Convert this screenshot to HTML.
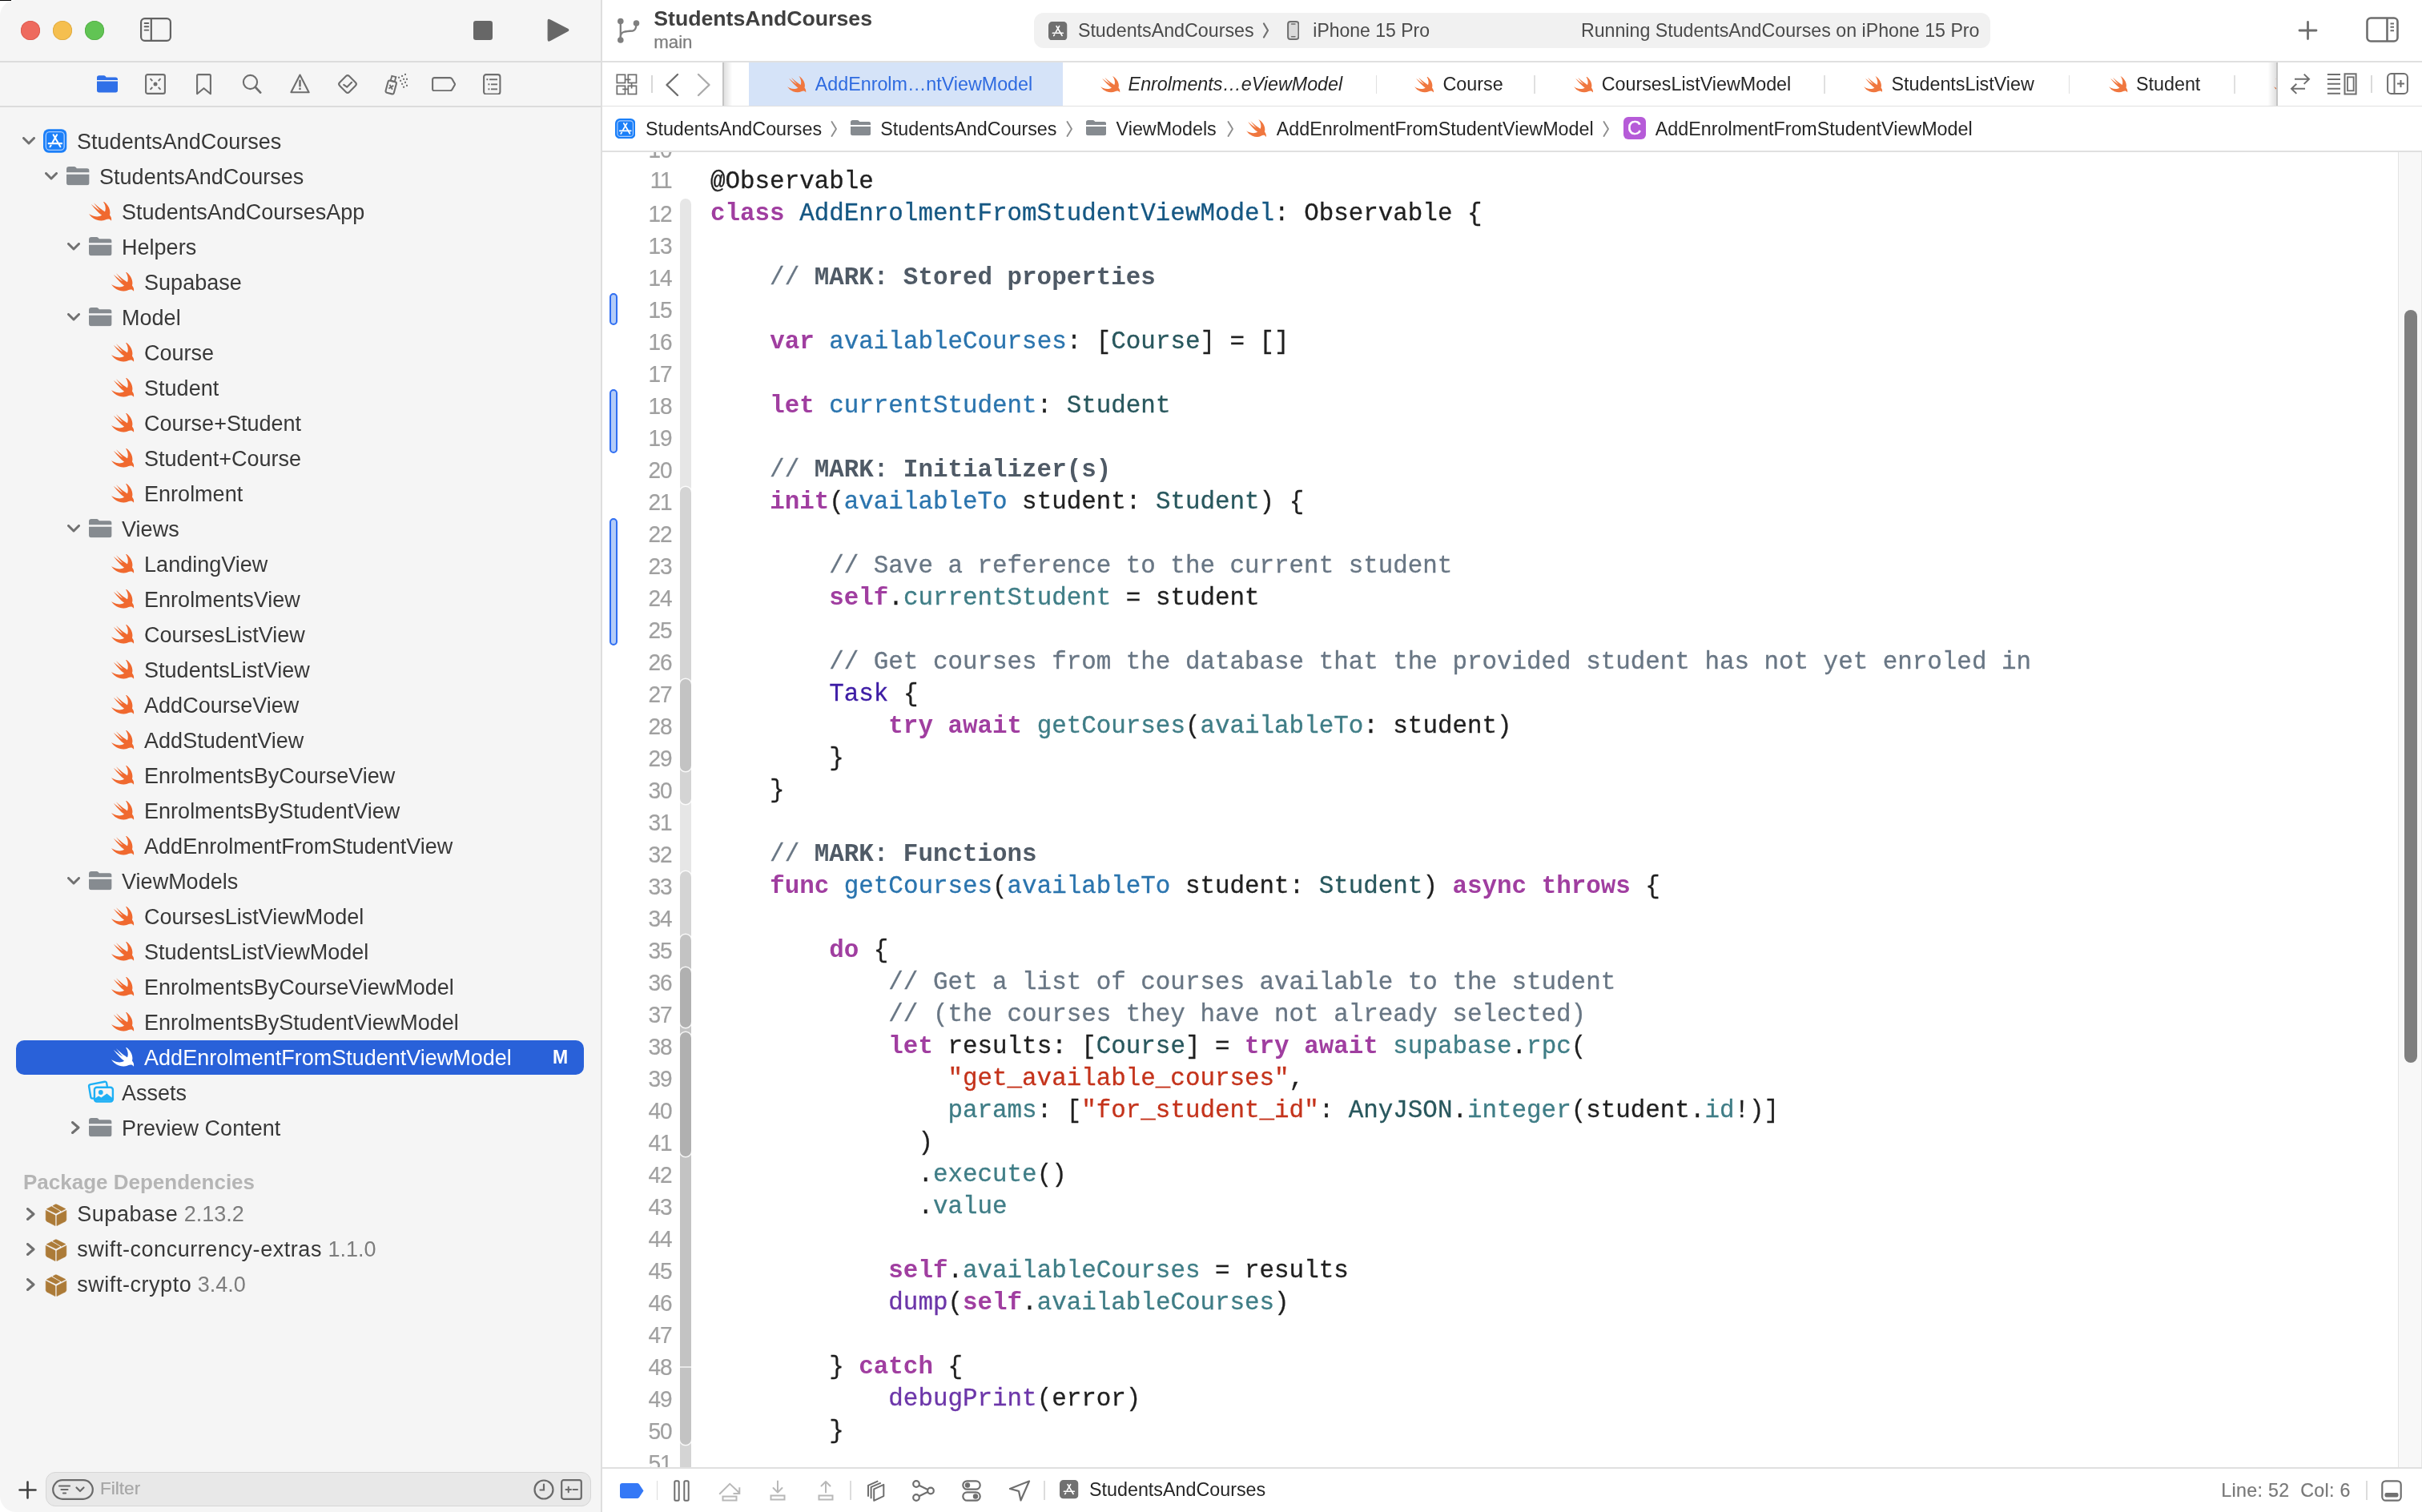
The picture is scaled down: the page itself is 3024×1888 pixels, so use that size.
<!DOCTYPE html>
<html><head><meta charset="utf-8"><title>Xcode</title>
<style>
html,body{margin:0;padding:0}
body{width:3024px;height:1888px;overflow:hidden;position:relative;background:#ffffff;font-family:"Liberation Sans",sans-serif}
.a{position:absolute;display:block}
.t{position:absolute;white-space:pre;line-height:0}
#root{position:absolute;left:0;top:0;width:3024px;height:1888px;will-change:transform;opacity:0.999}
.s{font-family:"Liberation Sans",sans-serif}
.m{font-family:"Liberation Mono",monospace}
</style></head><body><div id="root">

<svg width="0" height="0" style="position:absolute">
<defs>
<symbol id="swift" viewBox="2.41 3.41 18.12 16.21" preserveAspectRatio="none"><path fill="currentColor" d="M13.543 3.41c4.114 2.47 6.545 7.162 5.549 11.131-.024.093-.05.181-.076.272l.002.001c2.062 2.538 1.5 5.258 1.236 4.745-1.072-2.086-3.066-1.568-4.088-1.043a6.803 6.803 0 0 1-.281.158l-.02.012-.002.002c-2.115 1.123-4.957 1.205-7.812-.022a12.568 12.568 0 0 1-5.64-4.838c.649.48 1.35.902 2.097 1.252 3.019 1.414 6.051 1.311 8.197-.002C9.651 12.73 7.101 9.67 5.146 7.191a10.628 10.628 0 0 1-1.005-1.384c2.34 2.142 6.038 4.83 7.365 5.576C8.69 8.408 6.208 4.743 6.324 4.86c4.436 4.47 8.528 6.996 8.528 6.996.154.085.27.154.36.213.085-.215.16-.437.224-.668.708-2.588-.09-5.548-1.893-7.992z"/></symbol>
<symbol id="folder" viewBox="0 0 29 24" preserveAspectRatio="none"><path fill="currentColor" d="M0 3.2Q0 0 3.2 0H9.6Q11 0 12 1.1L13 2.4H25.8Q29 2.4 29 5.6V7.5H0Z M0 9.9H29V20.6Q29 23.6 26 23.6H3Q0 23.6 0 20.6Z"/></symbol>
<symbol id="chevd" viewBox="0 0 16 10"><path fill="none" stroke="currentColor" stroke-width="3" stroke-linecap="round" stroke-linejoin="round" d="M1.5 1.5L8 8L14.5 1.5"/></symbol>
<symbol id="chevr" viewBox="0 0 11 16"><path fill="none" stroke="currentColor" stroke-width="3" stroke-linecap="round" stroke-linejoin="round" d="M1.5 1.5L9 8L1.5 14.5"/></symbol>
<symbol id="appicon" viewBox="0 0 30 30"><rect x="0" y="0" width="30" height="30" rx="7" fill="#1b7ff8"/><rect x="3.4" y="3.4" width="23.2" height="23.2" rx="4.5" fill="none" stroke="#a9cdff" stroke-width="1.4"/><g fill="none" stroke="#fff" stroke-width="2.1" stroke-linecap="round"><path d="M12.8 7.2L21.8 22.3"/><path d="M17.4 7.2L11.8 16.8"/><path d="M6.8 18.2H23.4"/><path d="M8.6 22.4L9.8 20.6"/></g></symbol>
<symbol id="appgray" viewBox="0 0 30 30"><rect x="0" y="0" width="30" height="30" rx="6" fill="#707070"/><g fill="none" stroke="#fff" stroke-width="2.1" stroke-linecap="round"><path d="M12.8 7.2L21.8 22.3"/><path d="M17.4 7.2L11.8 16.8"/><path d="M6.8 18.2H23.4"/><path d="M8.6 22.4L9.8 20.6"/></g></symbol>
<symbol id="pkg" viewBox="0 0 28 28"><g fill="#ac7b38" stroke="#ac7b38" stroke-width="0.6" stroke-linejoin="round"><path d="M1.2 8.4L13 14.6V27.6L2.6 22.2Q1.2 21.4 1.2 19.8Z"/><path d="M26.8 8.4L14.9 14.6V27.6L25.4 22.2Q26.8 21.4 26.8 19.8Z"/><path d="M2.2 6.7L8.3 3.5L18.9 9.6L13.9 12.3Z"/><path d="M9.9 2.7L12.8 1.1Q13.9 0.6 15 1.1L25.9 6.6L20.7 9.2Z"/></g></symbol>
</defs></svg>

<div class="a" style="left:0;top:0;width:750px;height:1888px;background:#f5f5f5;border-top-left-radius:20px;border-bottom-left-radius:20px;"></div>
<div class="a" style="left:750px;top:0px;width:1.5px;height:1888px;background:#dedede;"></div>
<div class="a" style="left:0px;top:0px;width:14px;height:1.2px;background:#000;"></div>
<div class="a" style="left:26px;top:26px;width:24px;height:24px;border-radius:50%;background:#ee6a5e;box-shadow:inset 0 0 0 0.8px #d8584c"></div>
<div class="a" style="left:66px;top:26px;width:24px;height:24px;border-radius:50%;background:#f5bf4f;box-shadow:inset 0 0 0 0.8px #dca73f"></div>
<div class="a" style="left:106px;top:26px;width:24px;height:24px;border-radius:50%;background:#61c454;box-shadow:inset 0 0 0 0.8px #52ab45"></div>
<svg class="a" style="left:174.5px;top:22px;" width="39" height="30" viewBox="0 0 39 30"><rect x="1.1" y="1.1" width="36.8" height="27.8" rx="4.6" fill="none" stroke="#626262" stroke-width="2.2"/><path d="M13.8 1.1V28.9" stroke="#626262" stroke-width="2.2"/><path d="M5.6 7H10.3M5.6 11.3H10.3M5.6 15.6H10.3" stroke="#626262" stroke-width="1.9" stroke-linecap="round"/></svg>
<div class="a" style="left:591px;top:26px;width:24px;height:24px;background:#676767;border-radius:3.2px"></div>
<svg class="a" style="left:683px;top:23px;" width="29" height="30" viewBox="0 0 29 30"><path d="M1.2 3.2Q1.2 0.6 3.5 1.9L25.8 13.2Q27.8 14.5 25.8 15.8L3.5 27.6Q1.2 28.9 1.2 26.3Z" fill="#676767" stroke="#676767" stroke-width="1.2" stroke-linejoin="round"/></svg>
<div class="a" style="left:0px;top:76.2px;width:750px;height:1.8px;background:#dcdcdc;"></div>
<div class="a" style="left:0px;top:132.2px;width:750px;height:1.8px;background:#dcdcdc;"></div>
<svg class="a" style="left:121px;top:94px;" width="26" height="22" viewBox="0 0 29 24"><path fill="#3070e8" d="M0 3.2Q0 0 3.2 0H9.6Q11 0 12 1.1L13 2.4H25.8Q29 2.4 29 5.6V6.5H0Z M0 8.2H29V20.6Q29 23.6 26 23.6H3Q0 23.6 0 20.6Z"/></svg>
<svg class="a" style="left:181px;top:92px;" width="26" height="26" viewBox="0 0 26 26"><rect x="1.1" y="1.1" width="23.8" height="23.8" rx="2.2" fill="none" stroke="#6e6e6e" stroke-width="2.1"/><circle cx="13" cy="13" r="2.5" fill="#6e6e6e"/><path d="M6.5 6.2L9.3 9M19.5 6.2L16.7 9M6.5 19.8L9.3 17M19.5 19.8L16.7 17" stroke="#6e6e6e" stroke-width="1.9" stroke-linecap="butt"/></svg>
<svg class="a" style="left:244.5px;top:92px;" width="19" height="26.5" viewBox="0 0 19 26.5"><path d="M1.1 2.6Q1.1 1.1 2.6 1.1H16.4Q17.9 1.1 17.9 2.6V25.2L9.5 18.2L1.1 25.2Z" fill="none" stroke="#6e6e6e" stroke-width="2.1" stroke-linejoin="round"/></svg>
<svg class="a" style="left:302px;top:92px;" width="25" height="26" viewBox="0 0 25 26"><circle cx="10.5" cy="10.5" r="8.6" fill="none" stroke="#6e6e6e" stroke-width="2.1"/><path d="M16.8 16.8L23.2 23.6" stroke="#6e6e6e" stroke-width="2.7" stroke-linecap="round"/></svg>
<svg class="a" style="left:361.5px;top:92px;" width="25" height="25" viewBox="0 0 25 25"><path d="M12.5 1.5L23.6 23.3H1.4Z" fill="none" stroke="#6e6e6e" stroke-width="2.1" stroke-linejoin="round"/><path d="M12.5 8.8V15.3" stroke="#6e6e6e" stroke-width="2.5" stroke-linecap="round"/><circle cx="12.5" cy="18.9" r="1.35" fill="#6e6e6e"/></svg>
<svg class="a" style="left:420px;top:91px;" width="28" height="28" viewBox="0 0 28 28"><rect x="5.6" y="5.6" width="16.8" height="16.8" rx="2.8" fill="none" stroke="#6e6e6e" stroke-width="2.1" transform="rotate(45 14 14)"/><path d="M9.2 14.8L13.2 17.7L19.1 11.8" fill="none" stroke="#6e6e6e" stroke-width="2.1" stroke-linecap="round" stroke-linejoin="round"/></svg>
<svg class="a" style="left:478px;top:91px;" width="33" height="29" viewBox="0 0 33 29"><g transform="rotate(15 10.2 18)"><rect x="4.9" y="10.2" width="10.6" height="15.6" rx="2" fill="none" stroke="#6e6e6e" stroke-width="2.1"/><rect x="7.6" y="4" width="5.2" height="6.2" fill="none" stroke="#6e6e6e" stroke-width="1.9"/><path d="M7.8 15.2L12.6 20.2M12.6 15.2L7.8 20.2" stroke="#6e6e6e" stroke-width="1.9"/></g><rect x="27.0" y="0.9" width="2" height="2" fill="#6e6e6e"/><rect x="23.1" y="2.9" width="2" height="2" fill="#6e6e6e"/><rect x="19.1" y="4.8" width="2" height="2" fill="#6e6e6e"/><rect x="25.1" y="6.8" width="2" height="2" fill="#6e6e6e"/><rect x="29.0" y="6.8" width="2" height="2" fill="#6e6e6e"/><rect x="21.1" y="8.8" width="2" height="2" fill="#6e6e6e"/><rect x="27.0" y="10.8" width="2" height="2" fill="#6e6e6e"/><rect x="23.1" y="12.8" width="2" height="2" fill="#6e6e6e"/><rect x="29.0" y="14.8" width="2" height="2" fill="#6e6e6e"/><rect x="25.1" y="16.7" width="2" height="2" fill="#6e6e6e"/></svg>
<svg class="a" style="left:538.5px;top:95.5px;" width="30.5" height="18.5" viewBox="0 0 30.5 18.5"><path d="M3.5 1.1H22.8Q24.3 1.1 25.2 2.3L29.2 9.25L25.2 16.2Q24.3 17.4 22.8 17.4H3.5Q1.1 17.4 1.1 15V3.5Q1.1 1.1 3.5 1.1Z" fill="none" stroke="#6e6e6e" stroke-width="2.1" stroke-linejoin="round"/></svg>
<svg class="a" style="left:603px;top:91.8px;" width="22.5" height="26.6" viewBox="0 0 22.5 26.6"><rect x="1.1" y="1.1" width="20.3" height="24.4" rx="2.8" fill="none" stroke="#6e6e6e" stroke-width="2.1"/><g fill="#6e6e6e"><rect x="4.4" y="6.2" width="2" height="2"/><rect x="6.4" y="12.3" width="2" height="2"/><rect x="6.4" y="18.3" width="2" height="2"/><rect x="8" y="6.3" width="10" height="1.9"/><rect x="10" y="12.4" width="8" height="1.9"/><rect x="10" y="18.4" width="8" height="1.9"/></g></svg>
<svg class="a" style="left:28px;top:171.2px;color:#707070;" width="16" height="10"><use href="#chevd"/></svg>
<svg class="a" style="left:54.2px;top:160.9px;" width="29.5" height="30"><use href="#appicon"/></svg>
<div class="t s" style="top:176.94px;font-size:27px;color:#383838;left:96.1px;">StudentsAndCourses</div>
<svg class="a" style="left:56px;top:215.2px;color:#707070;" width="16" height="10"><use href="#chevd"/></svg>
<svg class="a" style="left:83.2px;top:208.1px;color:#868b90;" width="28.6" height="23.6"><use href="#folder"/></svg>
<div class="t s" style="top:220.94px;font-size:27px;color:#383838;left:124.1px;">StudentsAndCourses</div>
<svg class="a" style="left:111.3px;top:251px;color:#f0692f;" width="28.3" height="24.8"><use href="#swift"/></svg>
<div class="t s" style="top:264.94px;font-size:27px;color:#383838;left:152.1px;">StudentsAndCoursesApp</div>
<svg class="a" style="left:84px;top:303.2px;color:#707070;" width="16" height="10"><use href="#chevd"/></svg>
<svg class="a" style="left:111.2px;top:296.1px;color:#868b90;" width="28.6" height="23.6"><use href="#folder"/></svg>
<div class="t s" style="top:308.94px;font-size:27px;color:#383838;left:152.1px;">Helpers</div>
<svg class="a" style="left:139.3px;top:339px;color:#f0692f;" width="28.3" height="24.8"><use href="#swift"/></svg>
<div class="t s" style="top:352.94px;font-size:27px;color:#383838;left:180.1px;">Supabase</div>
<svg class="a" style="left:84px;top:391.2px;color:#707070;" width="16" height="10"><use href="#chevd"/></svg>
<svg class="a" style="left:111.2px;top:384.1px;color:#868b90;" width="28.6" height="23.6"><use href="#folder"/></svg>
<div class="t s" style="top:396.94px;font-size:27px;color:#383838;left:152.1px;">Model</div>
<svg class="a" style="left:139.3px;top:427px;color:#f0692f;" width="28.3" height="24.8"><use href="#swift"/></svg>
<div class="t s" style="top:440.94px;font-size:27px;color:#383838;left:180.1px;">Course</div>
<svg class="a" style="left:139.3px;top:471px;color:#f0692f;" width="28.3" height="24.8"><use href="#swift"/></svg>
<div class="t s" style="top:484.94px;font-size:27px;color:#383838;left:180.1px;">Student</div>
<svg class="a" style="left:139.3px;top:515px;color:#f0692f;" width="28.3" height="24.8"><use href="#swift"/></svg>
<div class="t s" style="top:528.94px;font-size:27px;color:#383838;left:180.1px;">Course+Student</div>
<svg class="a" style="left:139.3px;top:559px;color:#f0692f;" width="28.3" height="24.8"><use href="#swift"/></svg>
<div class="t s" style="top:572.94px;font-size:27px;color:#383838;left:180.1px;">Student+Course</div>
<svg class="a" style="left:139.3px;top:603px;color:#f0692f;" width="28.3" height="24.8"><use href="#swift"/></svg>
<div class="t s" style="top:616.94px;font-size:27px;color:#383838;left:180.1px;">Enrolment</div>
<svg class="a" style="left:84px;top:655.2px;color:#707070;" width="16" height="10"><use href="#chevd"/></svg>
<svg class="a" style="left:111.2px;top:648.1px;color:#868b90;" width="28.6" height="23.6"><use href="#folder"/></svg>
<div class="t s" style="top:660.94px;font-size:27px;color:#383838;left:152.1px;">Views</div>
<svg class="a" style="left:139.3px;top:691px;color:#f0692f;" width="28.3" height="24.8"><use href="#swift"/></svg>
<div class="t s" style="top:704.94px;font-size:27px;color:#383838;left:180.1px;">LandingView</div>
<svg class="a" style="left:139.3px;top:735px;color:#f0692f;" width="28.3" height="24.8"><use href="#swift"/></svg>
<div class="t s" style="top:748.94px;font-size:27px;color:#383838;left:180.1px;">EnrolmentsView</div>
<svg class="a" style="left:139.3px;top:779px;color:#f0692f;" width="28.3" height="24.8"><use href="#swift"/></svg>
<div class="t s" style="top:792.94px;font-size:27px;color:#383838;left:180.1px;">CoursesListView</div>
<svg class="a" style="left:139.3px;top:823px;color:#f0692f;" width="28.3" height="24.8"><use href="#swift"/></svg>
<div class="t s" style="top:836.94px;font-size:27px;color:#383838;left:180.1px;">StudentsListView</div>
<svg class="a" style="left:139.3px;top:867px;color:#f0692f;" width="28.3" height="24.8"><use href="#swift"/></svg>
<div class="t s" style="top:880.94px;font-size:27px;color:#383838;left:180.1px;">AddCourseView</div>
<svg class="a" style="left:139.3px;top:911px;color:#f0692f;" width="28.3" height="24.8"><use href="#swift"/></svg>
<div class="t s" style="top:924.94px;font-size:27px;color:#383838;left:180.1px;">AddStudentView</div>
<svg class="a" style="left:139.3px;top:955px;color:#f0692f;" width="28.3" height="24.8"><use href="#swift"/></svg>
<div class="t s" style="top:968.94px;font-size:27px;color:#383838;left:180.1px;">EnrolmentsByCourseView</div>
<svg class="a" style="left:139.3px;top:999px;color:#f0692f;" width="28.3" height="24.8"><use href="#swift"/></svg>
<div class="t s" style="top:1012.94px;font-size:27px;color:#383838;left:180.1px;">EnrolmentsByStudentView</div>
<svg class="a" style="left:139.3px;top:1043px;color:#f0692f;" width="28.3" height="24.8"><use href="#swift"/></svg>
<div class="t s" style="top:1056.94px;font-size:27px;color:#383838;left:180.1px;">AddEnrolmentFromStudentView</div>
<svg class="a" style="left:84px;top:1095.2px;color:#707070;" width="16" height="10"><use href="#chevd"/></svg>
<svg class="a" style="left:111.2px;top:1088.1px;color:#868b90;" width="28.6" height="23.6"><use href="#folder"/></svg>
<div class="t s" style="top:1100.94px;font-size:27px;color:#383838;left:152.1px;">ViewModels</div>
<svg class="a" style="left:139.3px;top:1131px;color:#f0692f;" width="28.3" height="24.8"><use href="#swift"/></svg>
<div class="t s" style="top:1144.94px;font-size:27px;color:#383838;left:180.1px;">CoursesListViewModel</div>
<svg class="a" style="left:139.3px;top:1175px;color:#f0692f;" width="28.3" height="24.8"><use href="#swift"/></svg>
<div class="t s" style="top:1188.94px;font-size:27px;color:#383838;left:180.1px;">StudentsListViewModel</div>
<svg class="a" style="left:139.3px;top:1219px;color:#f0692f;" width="28.3" height="24.8"><use href="#swift"/></svg>
<div class="t s" style="top:1232.94px;font-size:27px;color:#383838;left:180.1px;">EnrolmentsByCourseViewModel</div>
<svg class="a" style="left:139.3px;top:1263px;color:#f0692f;" width="28.3" height="24.8"><use href="#swift"/></svg>
<div class="t s" style="top:1276.94px;font-size:27px;color:#383838;left:180.1px;">EnrolmentsByStudentViewModel</div>
<div class="a" style="left:20.4px;top:1298.8px;width:708.2px;height:43.2px;background:#2961d9;border-radius:10px"></div>
<svg class="a" style="left:139.3px;top:1307px;color:#ffffff;" width="28.3" height="24.8"><use href="#swift"/></svg>
<div class="t s" style="top:1320.94px;font-size:27px;color:#ffffff;left:180.1px;">AddEnrolmentFromStudentViewModel</div>
<div class="t s" style="top:1320.03px;font-size:23px;color:#ffffff;left:690px;font-weight:bold;">M</div>
<svg class="a" style="left:109px;top:1348px;" width="34" height="30" viewBox="0 0 34 30"><g fill="none" stroke="#1fb0f5" stroke-width="2.4" stroke-linejoin="round"><path d="M8.9 23.4L6.6 23.6Q4.6 23.8 4.3 21.7L2.1 8.6Q1.8 6.5 3.9 6.1L21.6 2.7Q23.7 2.3 24.1 4.4L25 9.5"/><rect x="8.9" y="9.7" width="23" height="17.8" rx="3"/></g><g fill="#1fb0f5"><circle cx="16.8" cy="16" r="2.9"/><path d="M10 23.2L14.1 20.4L17.4 22.6L24.4 17.6L31 22.8V26.6H10Z"/></g></svg>
<div class="t s" style="top:1364.94px;font-size:27px;color:#383838;left:152.1px;">Assets</div>
<svg class="a" style="left:89px;top:1400.2px;color:#707070;" width="11" height="16"><use href="#chevr"/></svg>
<svg class="a" style="left:111.2px;top:1396.1px;color:#868b90;" width="28.6" height="23.6"><use href="#folder"/></svg>
<div class="t s" style="top:1408.94px;font-size:27px;color:#383838;left:152.1px;">Preview Content</div>
<div class="t s" style="top:1476.49px;font-size:26px;color:#b5b5b5;left:29px;font-weight:bold;">Package Dependencies</div>
<svg class="a" style="left:32.5px;top:1508px;color:#707070;" width="11" height="16"><use href="#chevr"/></svg>
<svg class="a" style="left:56px;top:1502.5px;" width="28" height="28"><use href="#pkg"/></svg>
<div class="t s" style="top:1516.44px;font-size:27px;color:#383838;left:96.2px;"><span style="letter-spacing:0.55px">Supabase</span> <span style="color:#7d7d7d">2.13.2</span></div>
<svg class="a" style="left:32.5px;top:1552px;color:#707070;" width="11" height="16"><use href="#chevr"/></svg>
<svg class="a" style="left:56px;top:1546.5px;" width="28" height="28"><use href="#pkg"/></svg>
<div class="t s" style="top:1560.44px;font-size:27px;color:#383838;left:96.2px;"><span style="letter-spacing:0.55px">swift-concurrency-extras</span> <span style="color:#7d7d7d">1.1.0</span></div>
<svg class="a" style="left:32.5px;top:1596px;color:#707070;" width="11" height="16"><use href="#chevr"/></svg>
<svg class="a" style="left:56px;top:1590.5px;" width="28" height="28"><use href="#pkg"/></svg>
<div class="t s" style="top:1604.44px;font-size:27px;color:#383838;left:96.2px;"><span style="letter-spacing:0.55px">swift-crypto</span> <span style="color:#7d7d7d">3.4.0</span></div>
<svg class="a" style="left:23px;top:1849px;" width="23" height="23" viewBox="0 0 23 23"><path d="M11.5 1.5V21.5M1.5 11.5H21.5" stroke="#404040" stroke-width="2.6" stroke-linecap="round"/></svg>
<div class="a" style="left:56.5px;top:1838px;width:681.8px;height:43.4px;box-sizing:border-box;border-radius:12px;background:#e8e8e8;border:1px solid #d6d6d6"></div>
<svg class="a" style="left:65px;top:1847px;" width="52" height="26" viewBox="0 0 52 26"><rect x="1.2" y="1.2" width="49.6" height="23.6" rx="11.8" fill="none" stroke="#6a6a6a" stroke-width="2.2"/><path d="M9 8.5H22M11.5 13H19.5M14 17.5H17" stroke="#6a6a6a" stroke-width="2.2" stroke-linecap="round"/><path d="M30.5 10.5L35 15L39.5 10.5" fill="none" stroke="#6a6a6a" stroke-width="2.2" stroke-linecap="round" stroke-linejoin="round"/></svg>
<div class="t s" style="top:1858.87px;font-size:22.6px;color:#a6a6a6;left:125px;-webkit-text-stroke:0.2px #a6a6a6;">Filter</div>
<svg class="a" style="left:666px;top:1847px;" width="26" height="26" viewBox="0 0 26 26"><circle cx="13" cy="13" r="11.5" fill="none" stroke="#6a6a6a" stroke-width="2.2"/><path d="M13 6.5V13.5H8.5" fill="none" stroke="#6a6a6a" stroke-width="2.2" stroke-linecap="round"/></svg>
<svg class="a" style="left:700px;top:1847px;" width="27" height="26" viewBox="0 0 27 26"><rect x="1.2" y="1.2" width="24.6" height="23.6" rx="2.5" fill="none" stroke="#6a6a6a" stroke-width="2.2"/><path d="M6.5 13H13M9.75 9.75V16.25M15.5 13H21" stroke="#6a6a6a" stroke-width="2" stroke-linecap="round"/></svg>
<svg class="a" style="left:768px;top:20px;" width="34" height="36" viewBox="0 0 34 36"><g fill="#7f7f7f"><circle cx="6.8" cy="6.5" r="3.8"/><circle cx="26.5" cy="9" r="3.8"/><circle cx="6.8" cy="30" r="3.8"/></g><g fill="none" stroke="#7f7f7f" stroke-width="2.3" stroke-linecap="round"><path d="M6.8 8V28"/><path d="M26.3 11Q26 18 22 18.5Q14 19 10.5 20Q7 21.5 6.8 26"/></g></svg>
<div class="t s" style="top:23.04px;font-size:26.7px;color:#404040;left:816.2px;font-weight:bold;">StudentsAndCourses</div>
<div class="t s" style="top:52.57px;font-size:22.3px;color:#7c7c7c;left:816.2px;-webkit-text-stroke:0.25px #7c7c7c;">main</div>
<div class="a" style="left:1291px;top:16px;width:1194px;height:44px;background:#f1f1f1;border-radius:12px"></div>
<svg class="a" style="left:1309px;top:26.7px;" width="23.5" height="23.5"><use href="#appgray"/></svg>
<div class="t s" style="top:38.04px;font-size:23.25px;color:#4a4a4a;left:1345.9px;">StudentsAndCourses</div>
<svg class="a" style="left:1576px;top:28px;" width="9" height="20" viewBox="0 0 9 20"><path d="M2 1.5L7 10L2 18.5" fill="none" stroke="#717171" stroke-width="2.2" stroke-linecap="round" stroke-linejoin="round"/></svg>
<svg class="a" style="left:1606.5px;top:26px;" width="15.5" height="24" viewBox="0 0 15.5 24"><rect x="1.1" y="1.1" width="13.3" height="21.8" rx="3" fill="#dadada" stroke="#6e6e6e" stroke-width="2"/><path d="M5.5 19.8H10M5.5 4H10" stroke="#6e6e6e" stroke-width="1.4" stroke-linecap="round"/></svg>
<div class="t s" style="top:38.13px;font-size:23px;color:#4a4a4a;left:1639.3px;">iPhone 15 Pro</div>
<div class="t s" style="top:38.06px;font-size:23.2px;color:#4a4a4a;right:552.5px;">Running StudentsAndCourses on iPhone 15 Pro</div>
<svg class="a" style="left:2868px;top:26px;" width="27" height="24" viewBox="0 0 27 24"><path d="M13.5 1.5V22.5M3 12H24" stroke="#6e6e6e" stroke-width="2.8" stroke-linecap="round"/></svg>
<svg class="a" style="left:2954px;top:21px;" width="41" height="32" viewBox="0 0 41 32"><rect x="1.5" y="1.5" width="38" height="29" rx="4.5" fill="none" stroke="#6e6e6e" stroke-width="2.6"/><path d="M26.5 1.5V30.5" stroke="#6e6e6e" stroke-width="2.6"/><path d="M30.5 8.5H35M30.5 12.8H35M30.5 17.2H35" stroke="#6e6e6e" stroke-width="2"/></svg>
<div class="a" style="left:751.5px;top:76.2px;width:2272.5px;height:1.8px;background:#e0e0e0;"></div>
<div class="a" style="left:751.5px;top:131.6px;width:2272.5px;height:1.8px;background:#e0e0e0;"></div>
<svg class="a" style="left:768.5px;top:91.5px;" width="27.5" height="27.5" viewBox="0 0 27.5 27.5"><g fill="none" stroke="#6e6e6e" stroke-width="1.7"><rect x="1.3" y="1.3" width="10.2" height="10.2"/><rect x="15.3" y="1.3" width="10.2" height="10.2"/><rect x="1.3" y="15.3" width="10.2" height="10.2"/><rect x="15.3" y="15.3" width="10.2" height="10.2"/></g><g stroke="#6e6e6e" stroke-width="1.7"><path d="M11.5 7.3H18.5M19.6 11.5V18.5M8.2 19.3H15.3"/></g></svg>
<div class="a" style="left:813px;top:94px;width:1.5px;height:22px;background:#d8d8d8;"></div>
<svg class="a" style="left:829.5px;top:90.5px;" width="19" height="30" viewBox="0 0 19 30"><path d="M16 2L2.5 15L16 28" fill="none" stroke="#6e6e6e" stroke-width="2.4" stroke-linecap="round" stroke-linejoin="round"/></svg>
<svg class="a" style="left:868.5px;top:90.5px;" width="19" height="30" viewBox="0 0 19 30"><path d="M3 2L16.5 15L3 28" fill="none" stroke="#ababab" stroke-width="2.4" stroke-linecap="round" stroke-linejoin="round"/></svg>
<div class="a" style="left:902px;top:78px;width:14px;height:53.6px;background:linear-gradient(90deg,#c4c4c4 0,#c4c4c4 1.6px,rgba(0,0,0,0.13) 1.6px,rgba(0,0,0,0) 13px)"></div>
<div class="a" style="left:934.5px;top:78px;width:392.3px;height:53.6px;background:#d5e3f8;"></div>
<svg class="a" style="left:983px;top:95px;color:#f0773f;" width="23.5" height="20.5"><use href="#swift"/></svg>
<div class="t s" style="top:104.52px;font-size:23.3px;color:#2f6be0;left:1017.7px;">AddEnrolm…ntViewModel</div>
<svg class="a" style="left:1374px;top:95px;color:#f0773f;" width="24.5" height="20.5"><use href="#swift"/></svg>
<div class="t s" style="top:104.52px;font-size:23.3px;color:#262626;left:1408.6px;font-style:italic;">Enrolments…eViewModel</div>
<div class="a" style="left:1717.5px;top:93.5px;width:1.6px;height:23px;background:#e0e0e0;"></div>
<svg class="a" style="left:1766px;top:95px;color:#f0773f;" width="24" height="20.5"><use href="#swift"/></svg>
<div class="t s" style="top:104.52px;font-size:23.3px;color:#262626;left:1801.5px;">Course</div>
<div class="a" style="left:1915.3px;top:93.5px;width:1.6px;height:23px;background:#e0e0e0;"></div>
<svg class="a" style="left:1964.6px;top:95px;color:#f0773f;" width="24" height="20.5"><use href="#swift"/></svg>
<div class="t s" style="top:104.52px;font-size:23.3px;color:#262626;left:1999.7px;">CoursesListViewModel</div>
<div class="a" style="left:2277.3px;top:93.5px;width:1.6px;height:23px;background:#e0e0e0;"></div>
<svg class="a" style="left:2326.8px;top:95px;color:#f0773f;" width="23.5" height="20.5"><use href="#swift"/></svg>
<div class="t s" style="top:104.52px;font-size:23.3px;color:#262626;left:2361.5px;">StudentsListView</div>
<div class="a" style="left:2582.8px;top:93.5px;width:1.6px;height:23px;background:#e0e0e0;"></div>
<svg class="a" style="left:2633px;top:95px;color:#f0773f;" width="23.5" height="20.5"><use href="#swift"/></svg>
<div class="t s" style="top:104.52px;font-size:23.3px;color:#262626;left:2667px;">Student</div>
<div class="a" style="left:2789.3px;top:93.5px;width:1.6px;height:23px;background:#e0e0e0;"></div>
<div class="a" style="left:2836px;top:78px;width:8px;height:53.6px;overflow:hidden"><svg class="a" style="left:3px;top:17px;color:#f0773f" width="23.5" height="20.5"><use href="#swift"/></svg></div>
<div class="a" style="left:2830px;top:78px;width:14px;height:53.6px;background:linear-gradient(270deg,#c4c4c4 0,#c4c4c4 1.6px,rgba(0,0,0,0.13) 1.6px,rgba(0,0,0,0) 13px)"></div>
<svg class="a" style="left:2859px;top:90px;" width="27" height="30" viewBox="0 0 27 30"><g fill="none" stroke="#6e6e6e" stroke-width="2" stroke-linecap="butt" stroke-linejoin="miter"><path d="M6 8.7H24.2M17.7 2.6L24 8.7L17.7 14.9"/><path d="M1.6 20.8H19M8.3 14.7L2 20.8L8.3 26.9"/></g></svg>
<svg class="a" style="left:2905px;top:91px;" width="38" height="28" viewBox="0 0 38 28"><g stroke="#6e6e6e" stroke-width="2"><path d="M0.9 1.9H17M0.9 7.9H17M0.9 13.8H17M0.9 19.8H17M0.9 25.8H17"/></g><rect x="22.5" y="1.3" width="14.1" height="25.2" fill="none" stroke="#6e6e6e" stroke-width="2"/><rect x="26" y="5.3" width="7.6" height="17" fill="none" stroke="#6e6e6e" stroke-width="1.8"/></svg>
<div class="a" style="left:2960px;top:94px;width:1.5px;height:22px;background:#dadada;"></div>
<svg class="a" style="left:2979.5px;top:91.3px;" width="27" height="27" viewBox="0 0 27 27"><rect x="1.1" y="1.1" width="24.8" height="24.8" rx="4.5" fill="none" stroke="#6e6e6e" stroke-width="2"/><path d="M9.5 1.1V25.9" stroke="#6e6e6e" stroke-width="2"/><path d="M17.5 9.1V18.1M13 13.6H22" stroke="#6e6e6e" stroke-width="2"/></svg>
<div class="a" style="left:751.5px;top:188.2px;width:2272.5px;height:1.8px;background:#e0e0e0;"></div>
<svg class="a" style="left:768px;top:147.5px;" width="25.3" height="25.3"><use href="#appicon"/></svg>
<div class="t s" style="top:160.62px;font-size:23.3px;color:#262626;left:805.9px;">StudentsAndCourses</div>
<svg class="a" style="left:1037px;top:150px;" width="9" height="22" viewBox="0 0 9 22"><path d="M1.5 2L7 11L1.5 20" fill="none" stroke="#8e8e8e" stroke-width="1.9" stroke-linecap="round" stroke-linejoin="round"/></svg>
<svg class="a" style="left:1062px;top:150px;color:#868b90;" width="25.3" height="19.5"><use href="#folder"/></svg>
<div class="t s" style="top:160.62px;font-size:23.3px;color:#262626;left:1099.3px;">StudentsAndCourses</div>
<svg class="a" style="left:1330.5px;top:150px;" width="9" height="22" viewBox="0 0 9 22"><path d="M1.5 2L7 11L1.5 20" fill="none" stroke="#8e8e8e" stroke-width="1.9" stroke-linecap="round" stroke-linejoin="round"/></svg>
<svg class="a" style="left:1356px;top:150px;color:#868b90;" width="25.3" height="19.5"><use href="#folder"/></svg>
<div class="t s" style="top:160.62px;font-size:23.3px;color:#262626;left:1393.6px;">ViewModels</div>
<svg class="a" style="left:1531.6px;top:150px;" width="9" height="22" viewBox="0 0 9 22"><path d="M1.5 2L7 11L1.5 20" fill="none" stroke="#8e8e8e" stroke-width="1.9" stroke-linecap="round" stroke-linejoin="round"/></svg>
<svg class="a" style="left:1556px;top:149px;color:#f0773f;" width="25" height="22"><use href="#swift"/></svg>
<div class="t s" style="top:160.62px;font-size:23.3px;color:#262626;left:1593.8px;">AddEnrolmentFromStudentViewModel</div>
<svg class="a" style="left:2000.7px;top:150px;" width="9" height="22" viewBox="0 0 9 22"><path d="M1.5 2L7 11L1.5 20" fill="none" stroke="#8e8e8e" stroke-width="1.9" stroke-linecap="round" stroke-linejoin="round"/></svg>
<div class="a" style="left:2026.8px;top:146px;width:27.9px;height:27.6px;background:#b65bd8;border-radius:6px"></div>
<div class="t s" style="top:160.18px;font-size:24px;color:#ffffff;left:2040.75px;transform:translateX(-50%);-webkit-text-stroke:0.4px #fff;">C</div>
<div class="t s" style="top:160.62px;font-size:23.3px;color:#262626;left:2066.8px;">AddEnrolmentFromStudentViewModel</div>
<div class="a" style="left:751.5px;top:190px;width:2272.5px;height:1642px;overflow:hidden">
<div class="a" style="left:97.7px;top:58px;width:13.5px;height:1652px;background:#e6e6e6;border-radius:7px 7px 0 0;"></div>
<div class="a" style="left:97.7px;top:417.5px;width:13.5px;height:396px;background:#d4d4d4;box-shadow:0 0 0 1.6px rgba(255,255,255,0.85);border-radius:7px 7px 7px 7px;"></div>
<div class="a" style="left:97.7px;top:658px;width:13.5px;height:115.3px;background:#c3c3c3;box-shadow:0 0 0 1.6px rgba(255,255,255,0.85);border-radius:7px 7px 7px 7px;"></div>
<div class="a" style="left:97.7px;top:897.5px;width:13.5px;height:812.5px;background:#d4d4d4;box-shadow:0 0 0 1.6px rgba(255,255,255,0.85);border-radius:7px 7px 0 0;"></div>
<div class="a" style="left:97.7px;top:976.5px;width:13.5px;height:637.5px;background:#c3c3c3;box-shadow:0 0 0 1.6px rgba(255,255,255,0.85);border-radius:7px 7px 7px 7px;"></div>
<div class="a" style="left:97.7px;top:1018px;width:13.5px;height:75px;background:#b0b0b0;box-shadow:0 0 0 1.6px rgba(255,255,255,0.85);border-radius:7px 7px 7px 7px;"></div>
<div class="a" style="left:97.7px;top:1098.5px;width:13.5px;height:155px;background:#b0b0b0;box-shadow:0 0 0 1.6px rgba(255,255,255,0.85);border-radius:7px 7px 7px 7px;"></div>
<div class="a" style="left:97.7px;top:1516px;width:13.5px;height:1.5px;background:#e8e8e8;"></div>
<div class="a" style="left:9.4px;top:176px;width:10.2px;height:39.6px;background:#b3ccf8;box-sizing:border-box;border:2px solid #2f6ef2;border-radius:5.1px;"></div>
<div class="a" style="left:9.4px;top:296px;width:10.2px;height:79.6px;background:#b3ccf8;box-sizing:border-box;border:2px solid #2f6ef2;border-radius:5.1px;"></div>
<div class="a" style="left:9.4px;top:456.5px;width:10.2px;height:159px;background:#b3ccf8;box-sizing:border-box;border:2px solid #2f6ef2;border-radius:5.1px;"></div>
<div class="t s" style="right:2185.7px;top:-1.91px;font-size:28px;color:#a0a0a0;letter-spacing:-1.2px;transform:scaleY(1.03);transform-origin:0 9.71px;-webkit-text-stroke:0.2px #a0a0a0">10</div>
<div class="t s" style="right:2185.7px;top:36.19px;font-size:28px;color:#a0a0a0;letter-spacing:-1.2px;transform:scaleY(1.03);transform-origin:0 9.71px;-webkit-text-stroke:0.2px #a0a0a0">11</div>
<div class="t s" style="right:2185.7px;top:78.09px;font-size:28px;color:#a0a0a0;letter-spacing:-1.2px;transform:scaleY(1.03);transform-origin:0 9.71px;-webkit-text-stroke:0.2px #a0a0a0">12</div>
<div class="t s" style="right:2185.7px;top:118.09px;font-size:28px;color:#a0a0a0;letter-spacing:-1.2px;transform:scaleY(1.03);transform-origin:0 9.71px;-webkit-text-stroke:0.2px #a0a0a0">13</div>
<div class="t s" style="right:2185.7px;top:158.09px;font-size:28px;color:#a0a0a0;letter-spacing:-1.2px;transform:scaleY(1.03);transform-origin:0 9.71px;-webkit-text-stroke:0.2px #a0a0a0">14</div>
<div class="t s" style="right:2185.7px;top:198.09px;font-size:28px;color:#a0a0a0;letter-spacing:-1.2px;transform:scaleY(1.03);transform-origin:0 9.71px;-webkit-text-stroke:0.2px #a0a0a0">15</div>
<div class="t s" style="right:2185.7px;top:238.09px;font-size:28px;color:#a0a0a0;letter-spacing:-1.2px;transform:scaleY(1.03);transform-origin:0 9.71px;-webkit-text-stroke:0.2px #a0a0a0">16</div>
<div class="t s" style="right:2185.7px;top:278.09px;font-size:28px;color:#a0a0a0;letter-spacing:-1.2px;transform:scaleY(1.03);transform-origin:0 9.71px;-webkit-text-stroke:0.2px #a0a0a0">17</div>
<div class="t s" style="right:2185.7px;top:318.09px;font-size:28px;color:#a0a0a0;letter-spacing:-1.2px;transform:scaleY(1.03);transform-origin:0 9.71px;-webkit-text-stroke:0.2px #a0a0a0">18</div>
<div class="t s" style="right:2185.7px;top:358.09px;font-size:28px;color:#a0a0a0;letter-spacing:-1.2px;transform:scaleY(1.03);transform-origin:0 9.71px;-webkit-text-stroke:0.2px #a0a0a0">19</div>
<div class="t s" style="right:2185.7px;top:398.09px;font-size:28px;color:#a0a0a0;letter-spacing:-1.2px;transform:scaleY(1.03);transform-origin:0 9.71px;-webkit-text-stroke:0.2px #a0a0a0">20</div>
<div class="t s" style="right:2185.7px;top:438.09px;font-size:28px;color:#a0a0a0;letter-spacing:-1.2px;transform:scaleY(1.03);transform-origin:0 9.71px;-webkit-text-stroke:0.2px #a0a0a0">21</div>
<div class="t s" style="right:2185.7px;top:478.09px;font-size:28px;color:#a0a0a0;letter-spacing:-1.2px;transform:scaleY(1.03);transform-origin:0 9.71px;-webkit-text-stroke:0.2px #a0a0a0">22</div>
<div class="t s" style="right:2185.7px;top:518.09px;font-size:28px;color:#a0a0a0;letter-spacing:-1.2px;transform:scaleY(1.03);transform-origin:0 9.71px;-webkit-text-stroke:0.2px #a0a0a0">23</div>
<div class="t s" style="right:2185.7px;top:558.09px;font-size:28px;color:#a0a0a0;letter-spacing:-1.2px;transform:scaleY(1.03);transform-origin:0 9.71px;-webkit-text-stroke:0.2px #a0a0a0">24</div>
<div class="t s" style="right:2185.7px;top:598.09px;font-size:28px;color:#a0a0a0;letter-spacing:-1.2px;transform:scaleY(1.03);transform-origin:0 9.71px;-webkit-text-stroke:0.2px #a0a0a0">25</div>
<div class="t s" style="right:2185.7px;top:638.09px;font-size:28px;color:#a0a0a0;letter-spacing:-1.2px;transform:scaleY(1.03);transform-origin:0 9.71px;-webkit-text-stroke:0.2px #a0a0a0">26</div>
<div class="t s" style="right:2185.7px;top:678.09px;font-size:28px;color:#a0a0a0;letter-spacing:-1.2px;transform:scaleY(1.03);transform-origin:0 9.71px;-webkit-text-stroke:0.2px #a0a0a0">27</div>
<div class="t s" style="right:2185.7px;top:718.09px;font-size:28px;color:#a0a0a0;letter-spacing:-1.2px;transform:scaleY(1.03);transform-origin:0 9.71px;-webkit-text-stroke:0.2px #a0a0a0">28</div>
<div class="t s" style="right:2185.7px;top:758.09px;font-size:28px;color:#a0a0a0;letter-spacing:-1.2px;transform:scaleY(1.03);transform-origin:0 9.71px;-webkit-text-stroke:0.2px #a0a0a0">29</div>
<div class="t s" style="right:2185.7px;top:798.09px;font-size:28px;color:#a0a0a0;letter-spacing:-1.2px;transform:scaleY(1.03);transform-origin:0 9.71px;-webkit-text-stroke:0.2px #a0a0a0">30</div>
<div class="t s" style="right:2185.7px;top:838.09px;font-size:28px;color:#a0a0a0;letter-spacing:-1.2px;transform:scaleY(1.03);transform-origin:0 9.71px;-webkit-text-stroke:0.2px #a0a0a0">31</div>
<div class="t s" style="right:2185.7px;top:878.09px;font-size:28px;color:#a0a0a0;letter-spacing:-1.2px;transform:scaleY(1.03);transform-origin:0 9.71px;-webkit-text-stroke:0.2px #a0a0a0">32</div>
<div class="t s" style="right:2185.7px;top:918.09px;font-size:28px;color:#a0a0a0;letter-spacing:-1.2px;transform:scaleY(1.03);transform-origin:0 9.71px;-webkit-text-stroke:0.2px #a0a0a0">33</div>
<div class="t s" style="right:2185.7px;top:958.09px;font-size:28px;color:#a0a0a0;letter-spacing:-1.2px;transform:scaleY(1.03);transform-origin:0 9.71px;-webkit-text-stroke:0.2px #a0a0a0">34</div>
<div class="t s" style="right:2185.7px;top:998.09px;font-size:28px;color:#a0a0a0;letter-spacing:-1.2px;transform:scaleY(1.03);transform-origin:0 9.71px;-webkit-text-stroke:0.2px #a0a0a0">35</div>
<div class="t s" style="right:2185.7px;top:1038.09px;font-size:28px;color:#a0a0a0;letter-spacing:-1.2px;transform:scaleY(1.03);transform-origin:0 9.71px;-webkit-text-stroke:0.2px #a0a0a0">36</div>
<div class="t s" style="right:2185.7px;top:1078.09px;font-size:28px;color:#a0a0a0;letter-spacing:-1.2px;transform:scaleY(1.03);transform-origin:0 9.71px;-webkit-text-stroke:0.2px #a0a0a0">37</div>
<div class="t s" style="right:2185.7px;top:1118.09px;font-size:28px;color:#a0a0a0;letter-spacing:-1.2px;transform:scaleY(1.03);transform-origin:0 9.71px;-webkit-text-stroke:0.2px #a0a0a0">38</div>
<div class="t s" style="right:2185.7px;top:1158.09px;font-size:28px;color:#a0a0a0;letter-spacing:-1.2px;transform:scaleY(1.03);transform-origin:0 9.71px;-webkit-text-stroke:0.2px #a0a0a0">39</div>
<div class="t s" style="right:2185.7px;top:1198.09px;font-size:28px;color:#a0a0a0;letter-spacing:-1.2px;transform:scaleY(1.03);transform-origin:0 9.71px;-webkit-text-stroke:0.2px #a0a0a0">40</div>
<div class="t s" style="right:2185.7px;top:1238.09px;font-size:28px;color:#a0a0a0;letter-spacing:-1.2px;transform:scaleY(1.03);transform-origin:0 9.71px;-webkit-text-stroke:0.2px #a0a0a0">41</div>
<div class="t s" style="right:2185.7px;top:1278.09px;font-size:28px;color:#a0a0a0;letter-spacing:-1.2px;transform:scaleY(1.03);transform-origin:0 9.71px;-webkit-text-stroke:0.2px #a0a0a0">42</div>
<div class="t s" style="right:2185.7px;top:1318.09px;font-size:28px;color:#a0a0a0;letter-spacing:-1.2px;transform:scaleY(1.03);transform-origin:0 9.71px;-webkit-text-stroke:0.2px #a0a0a0">43</div>
<div class="t s" style="right:2185.7px;top:1358.09px;font-size:28px;color:#a0a0a0;letter-spacing:-1.2px;transform:scaleY(1.03);transform-origin:0 9.71px;-webkit-text-stroke:0.2px #a0a0a0">44</div>
<div class="t s" style="right:2185.7px;top:1398.09px;font-size:28px;color:#a0a0a0;letter-spacing:-1.2px;transform:scaleY(1.03);transform-origin:0 9.71px;-webkit-text-stroke:0.2px #a0a0a0">45</div>
<div class="t s" style="right:2185.7px;top:1438.09px;font-size:28px;color:#a0a0a0;letter-spacing:-1.2px;transform:scaleY(1.03);transform-origin:0 9.71px;-webkit-text-stroke:0.2px #a0a0a0">46</div>
<div class="t s" style="right:2185.7px;top:1478.09px;font-size:28px;color:#a0a0a0;letter-spacing:-1.2px;transform:scaleY(1.03);transform-origin:0 9.71px;-webkit-text-stroke:0.2px #a0a0a0">47</div>
<div class="t s" style="right:2185.7px;top:1518.09px;font-size:28px;color:#a0a0a0;letter-spacing:-1.2px;transform:scaleY(1.03);transform-origin:0 9.71px;-webkit-text-stroke:0.2px #a0a0a0">48</div>
<div class="t s" style="right:2185.7px;top:1558.09px;font-size:28px;color:#a0a0a0;letter-spacing:-1.2px;transform:scaleY(1.03);transform-origin:0 9.71px;-webkit-text-stroke:0.2px #a0a0a0">49</div>
<div class="t s" style="right:2185.7px;top:1598.09px;font-size:28px;color:#a0a0a0;letter-spacing:-1.2px;transform:scaleY(1.03);transform-origin:0 9.71px;-webkit-text-stroke:0.2px #a0a0a0">50</div>
<div class="t s" style="right:2185.7px;top:1638.09px;font-size:28px;color:#a0a0a0;letter-spacing:-1.2px;transform:scaleY(1.03);transform-origin:0 9.71px;-webkit-text-stroke:0.2px #a0a0a0">51</div>
<style>
.cl{position:absolute;white-space:pre;line-height:0;font-family:"Liberation Mono",monospace;font-size:30.89px;color:#1f1f1f;-webkit-text-stroke:0.3px currentColor}
.cl .k{color:#a03ea0;font-weight:bold;-webkit-text-stroke:0}
.cl .td{color:#155783}
.cl .d{color:#2a74ae}
.cl .pt{color:#28575d}
.cl .pf{color:#3f7d86}
.cl .of{color:#6c36a9}
.cl .ot{color:#3d1ca5}
.cl .st{color:#c4331b}
.cl .c{color:#687684}
.cl .mk{color:#4f5a66;font-weight:bold;-webkit-text-stroke:0}
</style>
<div class="cl" style="left:135.5px;top:37.48px">@Observable</div>
<div class="cl" style="left:135.5px;top:77.48px"><span class="k">class</span> <span class="td">AddEnrolmentFromStudentViewModel</span>: Observable {</div>
<div class="cl" style="left:135.5px;top:157.48px"><span class="c">    // </span><span class="mk">MARK: Stored properties</span></div>
<div class="cl" style="left:135.5px;top:237.48px">    <span class="k">var</span> <span class="d">availableCourses</span>: [<span class="pt">Course</span>] = []</div>
<div class="cl" style="left:135.5px;top:317.48px">    <span class="k">let</span> <span class="d">currentStudent</span>: <span class="pt">Student</span></div>
<div class="cl" style="left:135.5px;top:397.48px"><span class="c">    // </span><span class="mk">MARK: Initializer(s)</span></div>
<div class="cl" style="left:135.5px;top:437.48px">    <span class="k">init</span>(<span class="d">availableTo</span> student: <span class="pt">Student</span>) {</div>
<div class="cl" style="left:135.5px;top:517.48px"><span class="c">        // Save a reference to the current student</span></div>
<div class="cl" style="left:135.5px;top:557.48px">        <span class="k">self</span>.<span class="pf">currentStudent</span> = student</div>
<div class="cl" style="left:135.5px;top:637.48px"><span class="c">        // Get courses from the database that the provided student has not yet enroled in</span></div>
<div class="cl" style="left:135.5px;top:677.48px">        <span class="ot">Task</span> {</div>
<div class="cl" style="left:135.5px;top:717.48px">            <span class="k">try</span> <span class="k">await</span> <span class="pf">getCourses</span>(<span class="pf">availableTo</span>: student)</div>
<div class="cl" style="left:135.5px;top:757.48px">        }</div>
<div class="cl" style="left:135.5px;top:797.48px">    }</div>
<div class="cl" style="left:135.5px;top:877.48px"><span class="c">    // </span><span class="mk">MARK: Functions</span></div>
<div class="cl" style="left:135.5px;top:917.48px">    <span class="k">func</span> <span class="d">getCourses</span>(<span class="d">availableTo</span> student: <span class="pt">Student</span>) <span class="k">async</span> <span class="k">throws</span> {</div>
<div class="cl" style="left:135.5px;top:997.48px">        <span class="k">do</span> {</div>
<div class="cl" style="left:135.5px;top:1037.48px"><span class="c">            // Get a list of courses available to the student</span></div>
<div class="cl" style="left:135.5px;top:1077.48px"><span class="c">            // (the courses they have not already selected)</span></div>
<div class="cl" style="left:135.5px;top:1117.48px">            <span class="k">let</span> results: [<span class="pt">Course</span>] = <span class="k">try</span> <span class="k">await</span> <span class="pf">supabase</span>.<span class="pf">rpc</span>(</div>
<div class="cl" style="left:135.5px;top:1157.48px">                <span class="st">&quot;get_available_courses&quot;</span>,</div>
<div class="cl" style="left:135.5px;top:1197.48px">                <span class="pf">params</span>: [<span class="st">&quot;for_student_id&quot;</span>: <span class="pt">AnyJSON</span>.<span class="pf">integer</span>(student.<span class="pf">id</span>!)]</div>
<div class="cl" style="left:135.5px;top:1237.48px">              )</div>
<div class="cl" style="left:135.5px;top:1277.48px">              .<span class="pf">execute</span>()</div>
<div class="cl" style="left:135.5px;top:1317.48px">              .<span class="pf">value</span></div>
<div class="cl" style="left:135.5px;top:1397.48px">            <span class="k">self</span>.<span class="pf">availableCourses</span> = results</div>
<div class="cl" style="left:135.5px;top:1437.48px">            <span class="of">dump</span>(<span class="k">self</span>.<span class="pf">availableCourses</span>)</div>
<div class="cl" style="left:135.5px;top:1517.48px">        } <span class="k">catch</span> {</div>
<div class="cl" style="left:135.5px;top:1557.48px">            <span class="of">debugPrint</span>(error)</div>
<div class="cl" style="left:135.5px;top:1597.48px">        }</div>
<div class="a" style="left:2242.5px;top:0px;width:30px;height:1642px;background:#f8f8f8;box-sizing:border-box;border-left:1.8px solid #e3e3e3;border-right:1.5px solid #e6e6e6;"></div>
<div class="a" style="left:2250.7px;top:197.3px;width:15.8px;height:939.5px;background:#7f7f7f;border-radius:8px"></div>
</div>
<div class="a" style="left:751.5px;top:1832px;width:2272.5px;height:1.8px;background:#e0e0e0;"></div>
<svg class="a" style="left:773.5px;top:1851.5px;" width="30" height="19" viewBox="0 0 30 19"><path d="M3 0H21.5Q23 0 24 1.2L29.5 9.5L24 17.8Q23 19 21.5 19H3Q0 19 0 16V3Q0 0 3 0Z" fill="#3478f6"/></svg>
<div class="a" style="left:819.5px;top:1849px;width:1.5px;height:24px;background:#dcdcdc;"></div>
<svg class="a" style="left:841px;top:1847.5px;" width="20" height="27" viewBox="0 0 20 27"><rect x="1.3" y="1.3" width="5.4" height="24.4" rx="1.5" fill="none" stroke="#6e6e6e" stroke-width="2"/><rect x="13.3" y="1.3" width="5.4" height="24.4" rx="1.5" fill="none" stroke="#6e6e6e" stroke-width="2"/></svg>
<svg class="a" style="left:897px;top:1851px;" width="29" height="25" viewBox="0 0 29 25"><path d="M1.2 14.7L14.2 1.8L26.3 13.3M18.5 14.1H26.3V6.3" fill="none" stroke="#b8b8b8" stroke-width="2" stroke-linejoin="miter"/><rect x="5.5" y="17.6" width="17" height="4.9" fill="none" stroke="#b8b8b8" stroke-width="2"/></svg>
<svg class="a" style="left:961px;top:1847.5px;" width="20" height="27" viewBox="0 0 20 27"><path d="M10 1.5V15M4.5 10L10 15.5L15.5 10" fill="none" stroke="#b8b8b8" stroke-width="2" stroke-linecap="round" stroke-linejoin="round"/><rect x="1.5" y="19.5" width="17" height="5" fill="none" stroke="#b8b8b8" stroke-width="2"/></svg>
<svg class="a" style="left:1021px;top:1847.5px;" width="20" height="27" viewBox="0 0 20 27"><path d="M10 15.5V2M4.5 7.5L10 2L15.5 7.5" fill="none" stroke="#b8b8b8" stroke-width="2" stroke-linecap="round" stroke-linejoin="round"/><rect x="1.5" y="19.5" width="17" height="5" fill="none" stroke="#b8b8b8" stroke-width="2"/></svg>
<div class="a" style="left:1061px;top:1849px;width:1.5px;height:24px;background:#dcdcdc;"></div>
<svg class="a" style="left:1080px;top:1848px;" width="26" height="28" viewBox="0 0 26 28"><g fill="none" stroke="#6e6e6e" stroke-width="2" stroke-linejoin="round"><path d="M11.2 11.4L23.3 5.9V20.1L11.2 25.8Z"/><path d="M7.6 23.3V8.9L19.8 3.6"/><path d="M4.0 20.8V6.9L16.3 1.4"/></g></svg>
<svg class="a" style="left:1138px;top:1847.5px;" width="30" height="27" viewBox="0 0 30 27"><g fill="none" stroke="#6e6e6e" stroke-width="2.2"><circle cx="6" cy="5" r="3.8"/><circle cx="24" cy="13.5" r="3.8"/><circle cx="6" cy="22" r="3.8"/><path d="M9.5 6.8L20.3 12M9.5 20.2L20.3 15"/></g></svg>
<svg class="a" style="left:1201px;top:1847.5px;" width="24" height="27" viewBox="0 0 24 27"><g fill="none" stroke="#6e6e6e" stroke-width="2.2"><rect x="1.3" y="1.3" width="21.4" height="10.4" rx="5.2"/><rect x="1.3" y="15.3" width="21.4" height="10.4" rx="5.2"/></g><circle cx="7" cy="6.5" r="3.2" fill="#6e6e6e"/><circle cx="17" cy="20.5" r="3.2" fill="#6e6e6e"/></svg>
<svg class="a" style="left:1259px;top:1847.5px;" width="28" height="27" viewBox="0 0 28 27"><path d="M26 1.5L2 11L13 14L15.5 25.5Z" fill="none" stroke="#6e6e6e" stroke-width="2.2" stroke-linejoin="round"/></svg>
<div class="a" style="left:1303.2px;top:1849px;width:1.5px;height:24px;background:#dcdcdc;"></div>
<svg class="a" style="left:1323px;top:1848.4px;" width="23.5" height="23.5"><use href="#appgray"/></svg>
<div class="t s" style="top:1860.32px;font-size:23.3px;color:#262626;left:1360px;">StudentsAndCourses</div>
<div class="t s" style="top:1860.76px;font-size:23.2px;color:#787878;right:89.2px;letter-spacing:0.35px;-webkit-text-stroke:0.2px #787878;">Line: 52  Col: 6</div>
<div class="a" style="left:2954.2px;top:1849px;width:1.5px;height:24px;background:#dcdcdc;"></div>
<svg class="a" style="left:2973px;top:1847.5px;" width="26" height="27" viewBox="0 0 26 27"><rect x="1.3" y="1.3" width="23.4" height="24.4" rx="4.5" fill="none" stroke="#707070" stroke-width="2.2"/><rect x="4.5" y="16" width="17" height="5.5" rx="2" fill="#707070"/></svg>
</div></body></html>
